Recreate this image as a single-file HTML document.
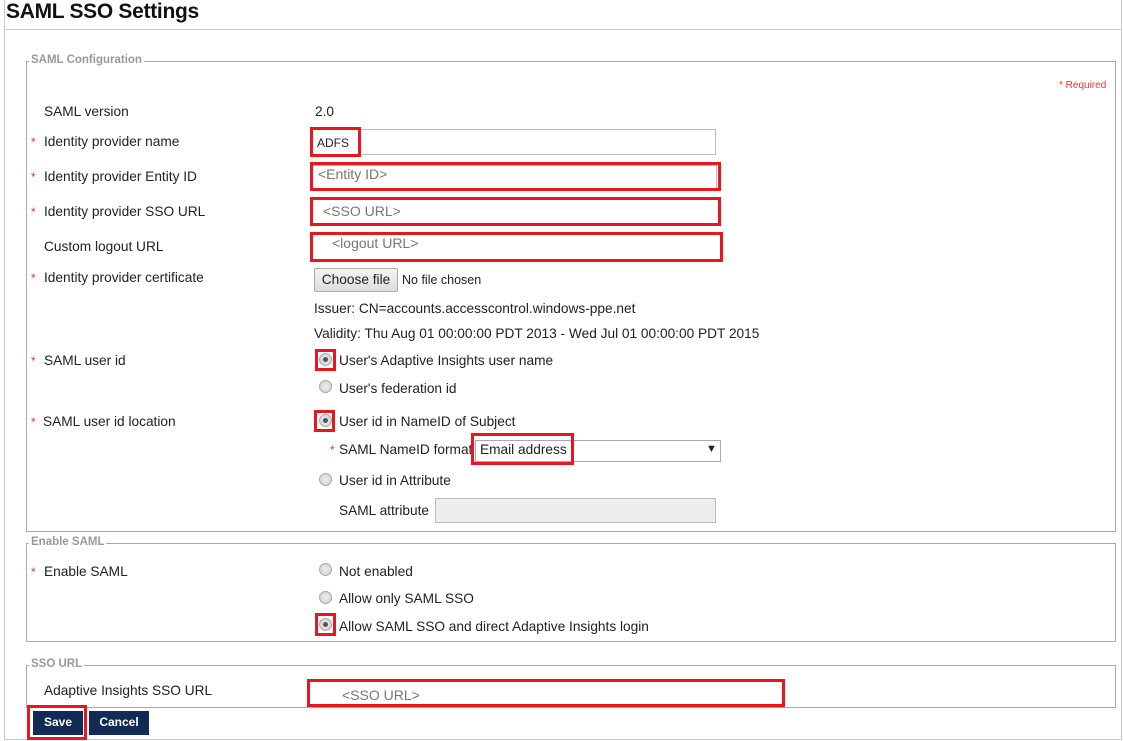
<!DOCTYPE html>
<html><head><style>
*{margin:0;padding:0;box-sizing:border-box}
body{width:1123px;height:741px;background:#fff;font-family:"Liberation Sans",sans-serif;font-size:13.7px;color:#222;position:relative;overflow:hidden}
.a{position:absolute;white-space:nowrap}
.frame{position:absolute;left:4px;top:0;width:1118px;height:740px;border:1px solid #c8c8c8;border-top:none}
.hr{position:absolute;left:4px;top:29px;width:1118px;border-top:1px solid #ccc}
.fs{position:absolute;border:1px solid #aaa}
.lg{position:absolute;background:#fff;color:#999;font-size:11.5px;font-weight:bold;padding:0 2px}
.st{color:#e33;font-size:12px}
.inp{position:absolute;border:1px solid #bbb;background:#fff;height:24px}
.red{position:absolute;border:3px solid #e8161f}
.ph{position:absolute;color:#777;font-size:14px}
.rad{position:absolute;width:13px;height:13px;border-radius:50%;border:1px solid #aaa;background:radial-gradient(circle,#eee,#ccc)}
.rad.on::after{content:"";position:absolute;left:3px;top:3px;width:5px;height:5px;border-radius:50%;background:#555}
.btn{position:absolute;background:#0f2b56;color:#fff;font-weight:bold;font-size:12px;text-align:center;line-height:23px;height:24px}
</style></head><body>
<div class="frame"></div>
<div class="a" style="left:6px;top:0px;font-size:21px;font-weight:bold;color:#111;letter-spacing:-0.3px">SAML SSO Settings</div>
<div class="hr"></div>

<div class="fs" style="left:26px;top:61px;width:1090px;height:471px"></div>
<div class="lg" style="left:29px;top:54px">SAML Configuration</div>
<div class="a st" style="left:1059px;top:80px;font-size:10px">* Required</div>

<div class="a" style="left:44px;top:104px">SAML version</div>
<div class="a" style="left:315px;top:104px">2.0</div>

<div class="a st" style="left:31px;top:135px">*</div><div class="a" style="left:44px;top:134px">Identity provider name</div>
<div class="inp" style="left:312px;top:129px;width:404px;height:26px"></div>
<div class="a" style="left:317px;top:136px;font-size:12px">ADFS</div>
<div class="red" style="left:310px;top:127px;width:51px;height:30px"></div>

<div class="a st" style="left:31px;top:170px">*</div><div class="a" style="left:44px;top:169px">Identity provider Entity ID</div>
<div class="inp" style="left:312px;top:165px;width:405px"></div>
<div class="ph" style="left:318px;top:166px">&lt;Entity ID&gt;</div>
<div class="red" style="left:310px;top:162px;width:411px;height:29px"></div>

<div class="a st" style="left:31px;top:205px">*</div><div class="a" style="left:44px;top:204px">Identity provider SSO URL</div>
<div class="ph" style="left:323px;top:203px">&lt;SSO URL&gt;</div>
<div class="red" style="left:310px;top:197px;width:411px;height:29px"></div>

<div class="a" style="left:44px;top:239px">Custom logout URL</div>
<div class="ph" style="left:332px;top:235px">&lt;logout URL&gt;</div>
<div class="red" style="left:310px;top:232px;width:413px;height:30px"></div>

<div class="a st" style="left:31px;top:271px">*</div><div class="a" style="left:44px;top:270px">Identity provider certificate</div>
<div class="a" style="left:314px;top:268px;width:84px;height:24px;border:1px solid #aaa;border-radius:2px;background:linear-gradient(#f4f4f4,#ddd);text-align:center;line-height:22px">Choose file</div>
<div class="a" style="left:402px;top:273px;font-size:12.5px">No file chosen</div>
<div class="a" style="left:314px;top:301px">Issuer: CN=accounts.accesscontrol.windows-ppe.net</div>
<div class="a" style="left:314px;top:326px">Validity: Thu Aug 01 00:00:00 PDT 2013 - Wed Jul 01 00:00:00 PDT 2015</div>

<div class="a st" style="left:31px;top:354px">*</div><div class="a" style="left:44px;top:353px">SAML user id</div>
<div class="rad on" style="left:319px;top:353px"></div>
<div class="red" style="left:315px;top:349px;width:21px;height:22px"></div>
<div class="a" style="left:339px;top:353px">User's Adaptive Insights user name</div>
<div class="rad" style="left:319px;top:380px"></div>
<div class="a" style="left:339px;top:381px">User's federation id</div>

<div class="a st" style="left:31px;top:415px">*</div><div class="a" style="left:43px;top:414px">SAML user id location</div>
<div class="rad on" style="left:319px;top:414px"></div>
<div class="red" style="left:314px;top:410px;width:21px;height:22px"></div>
<div class="a" style="left:339px;top:414px">User id in NameID of Subject</div>
<div class="a st" style="left:330px;top:443px">*</div>
<div class="a" style="left:339px;top:442px">SAML NameID format</div>
<div class="a" style="left:475px;top:440px;width:246px;height:22px;border:1px solid #aaa;background:#fff"></div>
<div class="a" style="left:480px;top:442px">Email address</div>
<div class="a" style="left:706px;top:443px;font-size:11px">▼</div>
<div class="red" style="left:471px;top:433px;width:103px;height:32px"></div>
<div class="rad" style="left:319px;top:473px"></div>
<div class="a" style="left:339px;top:473px">User id in Attribute</div>
<div class="a" style="left:339px;top:503px">SAML attribute</div>
<div class="a" style="left:435px;top:498px;width:281px;height:25px;border:1px solid #bbb;background:#eee"></div>

<div class="fs" style="left:26px;top:543px;width:1090px;height:99px"></div>
<div class="lg" style="left:29px;top:536px">Enable SAML</div>
<div class="a st" style="left:31px;top:565px">*</div><div class="a" style="left:44px;top:564px">Enable SAML</div>
<div class="rad" style="left:319px;top:563px"></div>
<div class="a" style="left:339px;top:564px">Not enabled</div>
<div class="rad" style="left:319px;top:591px"></div>
<div class="a" style="left:339px;top:591px">Allow only SAML SSO</div>
<div class="rad on" style="left:319px;top:618px"></div>
<div class="red" style="left:315px;top:613px;width:21px;height:23px"></div>
<div class="a" style="left:339px;top:619px">Allow SAML SSO and direct Adaptive Insights login</div>

<div class="fs" style="left:26px;top:665px;width:1090px;height:43px"></div>
<div class="lg" style="left:29px;top:658px">SSO URL</div>
<div class="a" style="left:44px;top:683px">Adaptive Insights SSO URL</div>
<div class="ph" style="left:342px;top:687px">&lt;SSO URL&gt;</div>
<div class="red" style="left:307px;top:679px;width:478px;height:28px"></div>

<div class="btn" style="left:33px;top:711px;width:50px">Save</div>
<div class="red" style="left:27px;top:705px;width:60px;height:35px"></div>
<div class="btn" style="left:89px;top:711px;width:60px">Cancel</div>
</body></html>
